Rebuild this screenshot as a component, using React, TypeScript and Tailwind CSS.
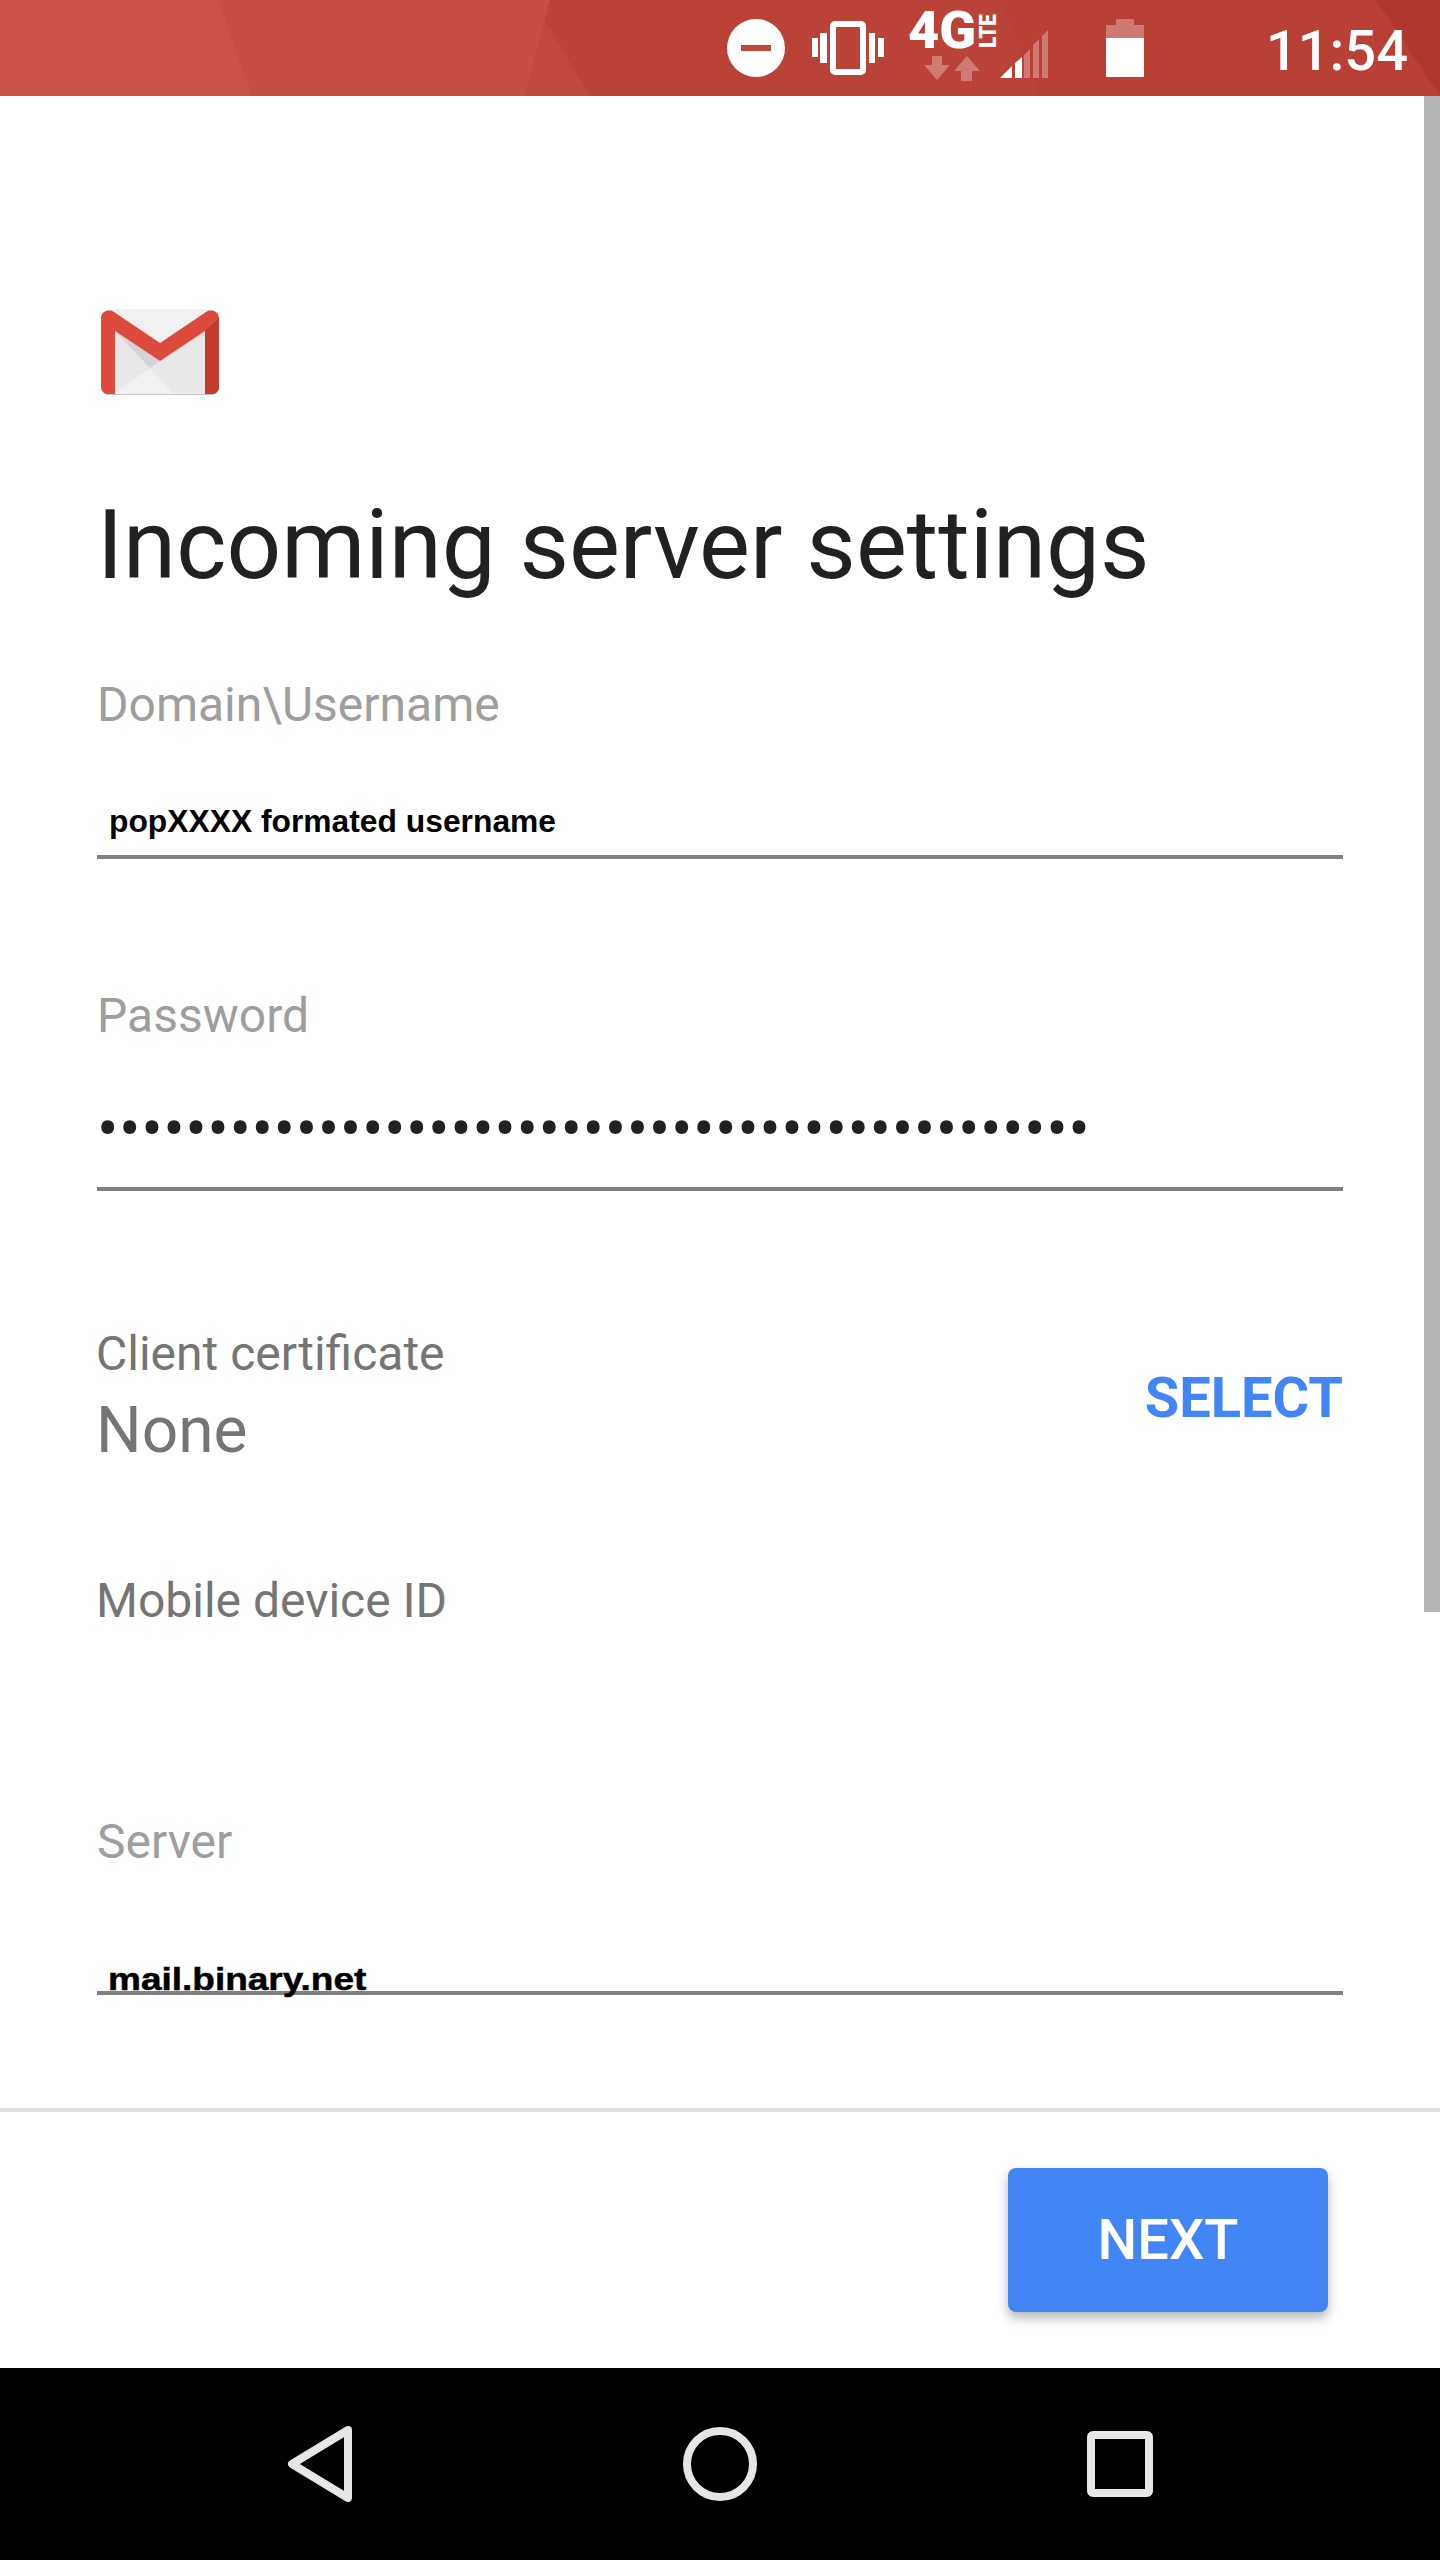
const roboto = "font-['Roboto',sans-serif]";

function StatusBackground() {
  return (
    <svg className="absolute inset-0 w-full h-full" viewBox="0 0 1440 96" preserveAspectRatio="none">
      <rect width="1440" height="96" fill="#ba4237" />
      <polygon points="0,0 550,0 525,96 0,96" fill="#c64e42" />
      <polygon points="0,0 218,0 252,96 0,96" fill="#cb5347" />
      <polygon points="525,96 545,20 590,96" fill="#c0473b" />
      <polygon points="1000,0 1376,0 1440,96 1040,96" fill="#b94035" />
      <polygon points="1376,0 1440,0 1440,96" fill="#ae382d" />
    </svg>
  );
}

function StatusIcons() {
  return (
    <div className={`relative h-full flex items-start justify-end ${roboto}`}>
      <svg width="58" height="58" viewBox="0 0 58 58" className="mt-[19px]">
        <circle cx="29" cy="29" r="29" fill="#fff" />
        <rect x="14" y="26" width="30" height="6" fill="#bf4639" />
      </svg>
      <svg width="72" height="54" viewBox="0 0 72 54" className="mt-[21px] ml-[27px]">
        <path d="M0 17h6v19H0zM8 12h7v30H8zM57 12h6v30h-6zM66 17h6v19h-6z" fill="#fff" />
        <rect x="21" y="3" width="30" height="48" rx="2" fill="none" stroke="#fff" strokeWidth="6" />
      </svg>
      <div className="relative w-[92px] h-[80px] ml-[24px] text-white">
        <span className="absolute left-0 top-[8px] text-[52px] leading-[46px] font-black origin-left scale-x-[1.04]">4G</span>
        <span className="absolute left-[60px] top-[19px] w-[40px] text-center text-[24px] leading-[24px] font-black rotate-[-90deg] scale-x-[0.86]">LTE</span>
        <svg width="60" height="26" viewBox="0 0 60 26" className="absolute left-[16px] top-[56px]">
          <path d="M8 0h10v9h8L13 24 0 9h8zM43 0l13 15h-8v10H37V15h-7z" fill="#fff" fillOpacity="0.3" />
        </svg>
      </div>
      <svg width="48" height="48" viewBox="0 0 48 48" className="mt-[30px]">
        <path d="M0 48 12 36v12zM15 33l7-6v21h-7z" fill="#fff" />
        <path d="M24 25l6-6v29h-6zM33 15l6-6v39h-6zM42 6l6-6v48h-6z" fill="#fff" fillOpacity="0.3" />
      </svg>
      <svg width="38" height="58" viewBox="0 0 38 58" className="mt-[19px] ml-[58px]">
        <path d="M10 0h18v6h10v13H0V6h10z" fill="#fff" fillOpacity="0.3" />
        <rect y="19" width="38" height="39" fill="#fff" />
      </svg>
      <span className="ml-[122px] mr-[32px] mt-[25px] text-[56px] leading-[52px] font-medium text-white">11:54</span>
    </div>
  );
}

function GmailLogo() {
  return (
    <svg width="118" height="87" viewBox="0 0 118 87">
      <rect x="1" y="3" width="116" height="84" rx="6" fill="#c4c4c4" />
      <rect x="10" y="1" width="98" height="85" fill="#f1f1f1" />
      <polygon points="14,23 14,85 104,85 104,23 59,53" fill="#e8e8e8" />
      <polygon points="14,85 49,60 72,85" fill="#f1f1f1" />
      <polygon points="14,23 49,60 59,53" fill="#d4d4d4" />
      <path d="M0 10a8 8 0 0 1 13-6l46 31 46-31a8 8 0 0 1 13 6v69a7 7 0 0 1-7 7h-7V23L59 53 14 23v63H7a7 7 0 0 1-7-7z" fill="#dd4b3f" />
      <path d="M104 23l14-13v69a7 7 0 0 1-7 7h-7z" fill="#c23b2b" />
    </svg>
  );
}

function InputLine() {
  return <div className="h-[4px] bg-[#808080]" />;
}

export default function App() {
  return (
    <div className={`w-[1440px] h-[2560px] flex flex-col bg-white overflow-hidden ${roboto}`}>
      <div className="relative h-[96px] shrink-0">
        <StatusBackground />
        <StatusIcons />
      </div>

      <main className="relative flex-1 pl-[97px] pr-[97px]">
        <div className="absolute right-0 top-0 w-[16px] h-[1516px] bg-[#b5b5b5]" />
        <div className="pt-[212px] pl-[4px]">
          <GmailLogo />
        </div>
        <h1 className="mt-[94px] text-[96px] leading-[112px] text-[#212121]">Incoming server settings</h1>

        <p className="mt-[76px] text-[48px] leading-[56px] text-[#9e9e9e]">Domain\Username</p>
        <p className="mt-[69px] pl-[12px] font-['Liberation_Sans',sans-serif] font-bold text-[31.8px] leading-[38px] text-black">popXXXX formated username</p>
        <div className="mt-[15px]"><InputLine /></div>

        <p className="mt-[129px] text-[48px] leading-[56px] text-[#9e9e9e]">Password</p>
        <p className="mt-[62px] text-[64px] leading-[48px] text-[#212121] tracking-[0.48px]">{"•".repeat(45)}</p>
        <div className="mt-[33px]"><InputLine /></div>

        <div className="mt-[135px] flex items-center justify-between">
          <div className="-ml-[1px]">
            <p className="text-[48px] leading-[56px] text-[#757575]">Client certificate</p>
            <p className="mt-[11px] text-[64px] leading-[76px] text-[#757575]">None</p>
          </div>
          <span className="text-[56px] leading-[64px] font-bold text-[#4285f4]">SELECT</span>
        </div>

        <p className="mt-[104px] -ml-[1px] text-[48px] leading-[56px] text-[#757575]">Mobile device ID</p>

        <p className="mt-[185px] text-[48px] leading-[56px] text-[#9e9e9e]">Server</p>
        <p className="mt-[93px] ml-[11px] font-['Liberation_Sans',sans-serif] font-bold text-[32px] leading-[32px] text-black relative z-10 origin-left scale-x-[1.156] [-webkit-text-stroke:0.5px_black]">mail.binary.net</p>
        <div className="mt-[-4px]"><InputLine /></div>
      </main>

      <div className="h-[260px] shrink-0 border-t-[4px] border-[#dfdfdf] flex items-start justify-end pr-[112px] pt-[56px]">
        <button className="w-[320px] h-[144px] rounded-[8px] bg-[#4285f4] text-white text-[56px] font-medium shadow-[0_6px_12px_rgba(0,0,0,0.3)]">NEXT</button>
      </div>

      <nav className="h-[192px] shrink-0 bg-black flex items-center justify-center">
        <div className="w-[866px] flex items-center justify-between">
          <svg width="66" height="76" viewBox="0 0 66 76">
            <path d="M61 4 5 38l56 34z" fill="none" stroke="#e6e6e6" strokeWidth="8" strokeLinejoin="round" />
          </svg>
          <svg width="74" height="74" viewBox="0 0 74 74">
            <circle cx="37" cy="37" r="33" fill="none" stroke="#e6e6e6" strokeWidth="8" />
          </svg>
          <svg width="66" height="66" viewBox="0 0 66 66">
            <rect x="4" y="4" width="58" height="58" rx="2" fill="none" stroke="#e6e6e6" strokeWidth="8" />
          </svg>
        </div>
      </nav>
    </div>
  );
}
